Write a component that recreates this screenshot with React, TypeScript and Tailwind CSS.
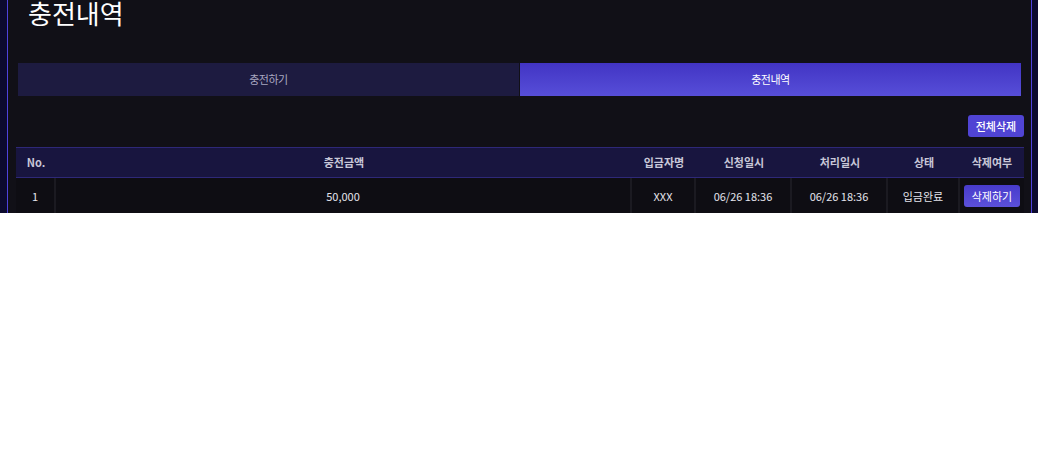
const font = { fontFamily: '"Noto Sans CJK KR", "Noto Sans", sans-serif' };

const cols = ["w-[40px]", "w-[576px]", "w-[64px]", "w-[96px]", "w-[96px]", "w-[72px]", "w-[64px]"];
const heads = ["No.", "충전금액", "입금자명", "신청일시", "처리일시", "상태", "삭제여부"];
const row = ["1", "50,000", "XXX", "06/26 18:36", "06/26 18:36", "입금완료"];

export default function App() {
  return (
    <div className="flex h-[213px] overflow-hidden bg-[#0c0a2e]" style={font}>
      <div className="w-[7px] shrink-0" />
      <main className="flex-1 border-x border-[#4e42dc] bg-[#111017]">
        <h1 className="mt-[0px] pl-[20px] text-[26px] leading-none text-white">충전내역</h1>

        <div className="mx-[10px] mt-[37px] flex gap-[1px] bg-[#111017]">
          <button className="h-[33px] flex-1 bg-[#1d1b40] text-[11px] tracking-[-0.5px] text-[#a9a8c0]">충전하기</button>
          <button className="h-[33px] flex-1 bg-gradient-to-b from-[#4234c4] to-[#574ed8] text-[11px] tracking-[-0.5px] text-white">
            충전내역
          </button>
        </div>

        <div className="mr-[7px] mt-[19px] flex justify-end">
          <button className="h-[22px] w-[56px] rounded-[3px] bg-[#5044d4] text-[11px] font-medium text-white">
            전체삭제
          </button>
        </div>

        <div className="ml-[8px] mt-[10px] w-[1008px]">
          <div className="flex h-[31px] items-center border-y border-[#2e2878] bg-[#18153f]">
            {heads.map((h, i) => (
              <div key={h} className={`${cols[i]} text-center text-[11px] font-semibold text-[#c8c7d8]`}>
                {h}
              </div>
            ))}
          </div>
          <div className="flex h-[36px] bg-[#0e0d13]">
            {row.map((c, i) => (
              <div
                key={i}
                className={`${cols[i]} flex items-center justify-center border-r-2 border-[#1b1a21] text-[11px] text-[#e4e4ec]`}
              >
                {c}
              </div>
            ))}
            <div className={`${cols[6]} flex items-center justify-center`}>
              <button className="h-[22px] w-[56px] rounded-[3px] bg-gradient-to-b from-[#483bcb] to-[#5b50da] text-[11px] text-white">
                삭제하기
              </button>
            </div>
          </div>
        </div>
      </main>
      <div className="w-[6px] shrink-0" />
    </div>
  );
}
